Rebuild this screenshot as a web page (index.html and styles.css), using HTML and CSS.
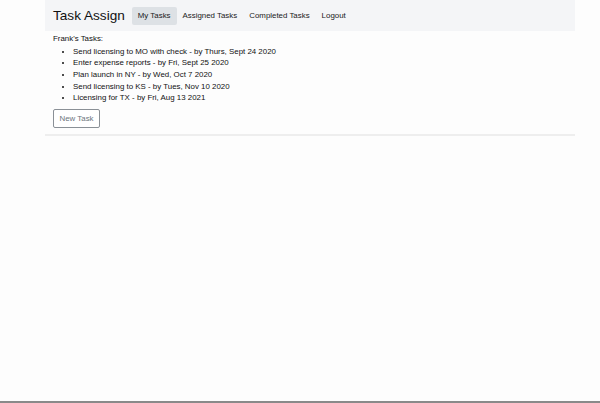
FILE: index.html
```html
<!DOCTYPE html>
<html>
<head>
<meta charset="utf-8">
<link rel="stylesheet" href="styles.css">
</head>
<body>
<div class="screen">
  <div class="container">
    <nav class="navbar">
      <span class="brand">Task Assign</span>
      <a class="nav-link active">My Tasks</a>
      <a class="nav-link">Assigned Tasks</a>
      <a class="nav-link">Completed Tasks</a>
      <a class="nav-link">Logout</a>
    </nav>
    <main class="content">
      <div class="heading">Frank's Tasks:</div>
      <ul class="tasks">
        <li>Send licensing to MO with check - by Thurs, Sept 24 2020</li>
        <li>Enter expense reports - by Fri, Sept 25 2020</li>
        <li>Plan launch in NY - by Wed, Oct 7 2020</li>
        <li>Send licensing to KS - by Tues, Nov 10 2020</li>
        <li>Licensing for TX - by Fri, Aug 13 2021</li>
      </ul>
      <button class="btn">New Task</button>
    </main>
    <hr class="rule">
  </div>
</div>
</body>
</html>
```
FILE: styles.css
```css
html, body {
  margin: 0;
  padding: 0;
  background: #fdfdfd;
  font-family: "Liberation Sans", Arial, sans-serif;
  color: #111;
}
.screen {
  height: 401px;
  border-bottom: 2px solid #8a8a8a;
  overflow: hidden;
}
.container {
  width: 530px;
  margin-left: 45px;
}
.navbar {
  height: 31px;
  background: #f4f5f7;
  display: flex;
  align-items: center;
  padding-left: 8px;
  box-sizing: border-box;
}
.brand {
  font-size: 13.6px;
  color: #111;
  margin-right: 7px;
  margin-top: -1px;
}
.nav-link {
  font-size: 7.9px;
  color: #1a1a1a;
  height: 18px;
  line-height: 18px;
  padding: 0 6px;
  border-radius: 2px;
}
.nav-link.active {
  background: #dde1e5;
}
.content {
  padding: 2px 8px 0;
}
.heading {
  font-size: 7.9px;
  line-height: 11.6px;
}
.tasks {
  margin: 1px 0 0;
  padding-left: 20px;
  font-size: 7.9px;
  line-height: 11.7px;
}
.btn {
  margin-top: 5px;
  font-family: inherit;
  font-size: 7.9px;
  color: #6c757d;
  background: #fff;
  border: 1px solid #8a9096;
  border-radius: 2px;
  height: 19px;
  padding: 0 5.5px;
}
.rule {
  margin: 6px 0 0;
  border: 0;
  height: 2px;
  background: #eeeeee;
}
```
